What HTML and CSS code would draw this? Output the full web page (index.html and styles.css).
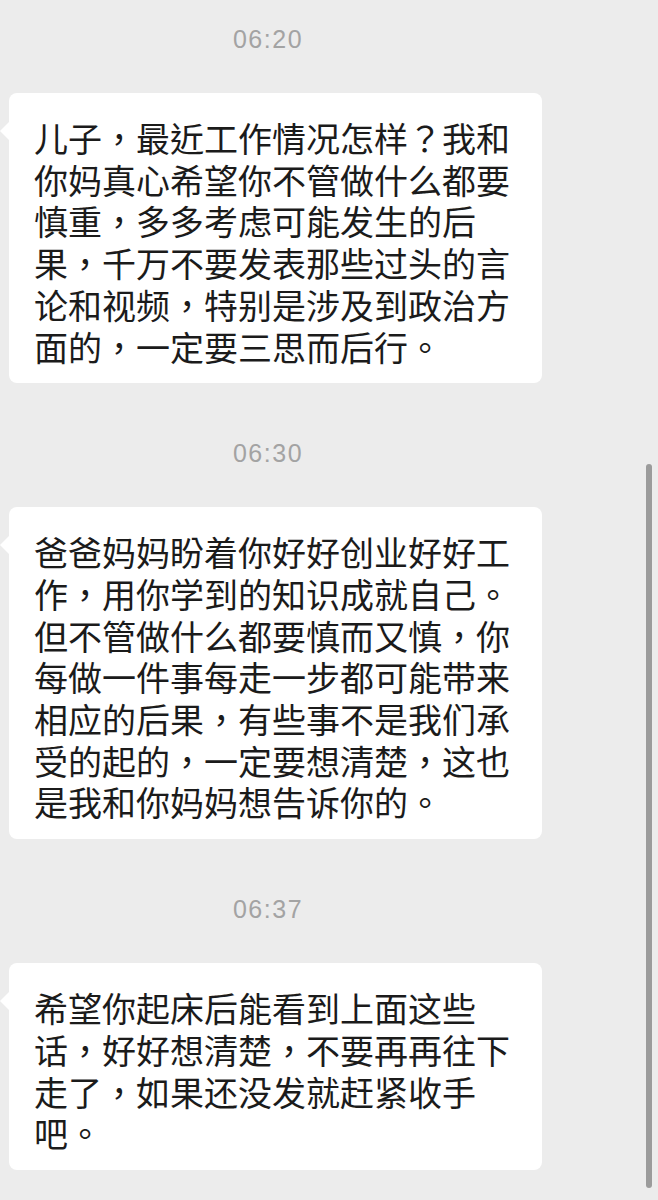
FILE: index.html
```html
<!DOCTYPE html>
<html lang="zh-CN">
<head>
    <meta charset="UTF-8">
    <meta name="viewport" content="width=device-width, initial-scale=1.0">
    <title>聊天</title>
    <link rel="stylesheet" href="styles.css">
</head>
<body>
    <div class="screen">
        <!-- zh-TW only so the font puts the punctuation in the middle of the cell -->
        <div class="chat" lang="zh-TW">
            <div class="time">06:20</div>
            <div class="bubble">儿子，最近工作情况怎样？我和你妈真心希望你不管做什么都要慎重，多多考虑可能发生的后果，千万不要发表那些过头的言论和视频，特别是涉及到政治方面的，一定要三思而后行。</div>

            <div class="time">06:30</div>
            <div class="bubble">爸爸妈妈盼着你好好创业好好工作，用你学到的知识成就自己。但不管做什么都要慎而又慎，你每做一件事每走一步都可能带来相应的后果，有些事不是我们承受的起的，一定要想清楚，这也是我和你妈妈想告诉你的。</div>

            <div class="time">06:37</div>
            <div class="bubble">希望你起床后能看到上面这些话，好好想清楚，不要再再往下走了，如果还没发就赶紧收手吧。</div>
        </div>
        <div class="input-bar"></div>
        <div class="scrollbar"></div>
    </div>
</body>
</html>
```

FILE: styles.css
```css
body {
    margin: 0;
    padding: 0;
    background: #ececec;
    font-family: "Noto Sans CJK SC", "Noto Sans", sans-serif;
}
.screen {
    position: relative;
    width: 658px;
    height: 1200px;
    overflow: hidden;
    display: flex;
    flex-direction: column;
}
.chat {
    flex: 1;
    padding-top: 24px;
}
.time {
    width: 536px;
    height: 30px;
    line-height: 30px;
    text-align: center;
    font-family: "Liberation Sans", Arial, sans-serif;
    font-size: 25px;
    letter-spacing: 1.5px;
    color: #a3a3a3;
    margin-bottom: 39px;
}
.bubble {
    position: relative;
    box-sizing: border-box;
    width: 533px;
    margin-left: 9px;
    margin-bottom: 55px;
    padding: 24px 24px 16px 25px;
    background: #fff;
    border-radius: 8px;
    font-family: "Noto Sans CJK TC", "Noto Sans CJK SC", sans-serif;
    font-size: 34px;
    line-height: 41.7px;
    color: #1b1b1b;
}
/* little tail pointing at the sender */
.bubble::before {
    content: "";
    position: absolute;
    left: -9px;
    top: 29px;
    border-top: 9px solid transparent;
    border-bottom: 9px solid transparent;
    border-right: 9px solid #fff;
}
.input-bar {
    height: 5px;
    background: #f5f5f5;
}
.scrollbar {
    position: absolute;
    left: 646px;
    top: 464px;
    width: 6px;
    height: 724px;
    border-radius: 3px;
    background: #9b9b9b;
}
```
